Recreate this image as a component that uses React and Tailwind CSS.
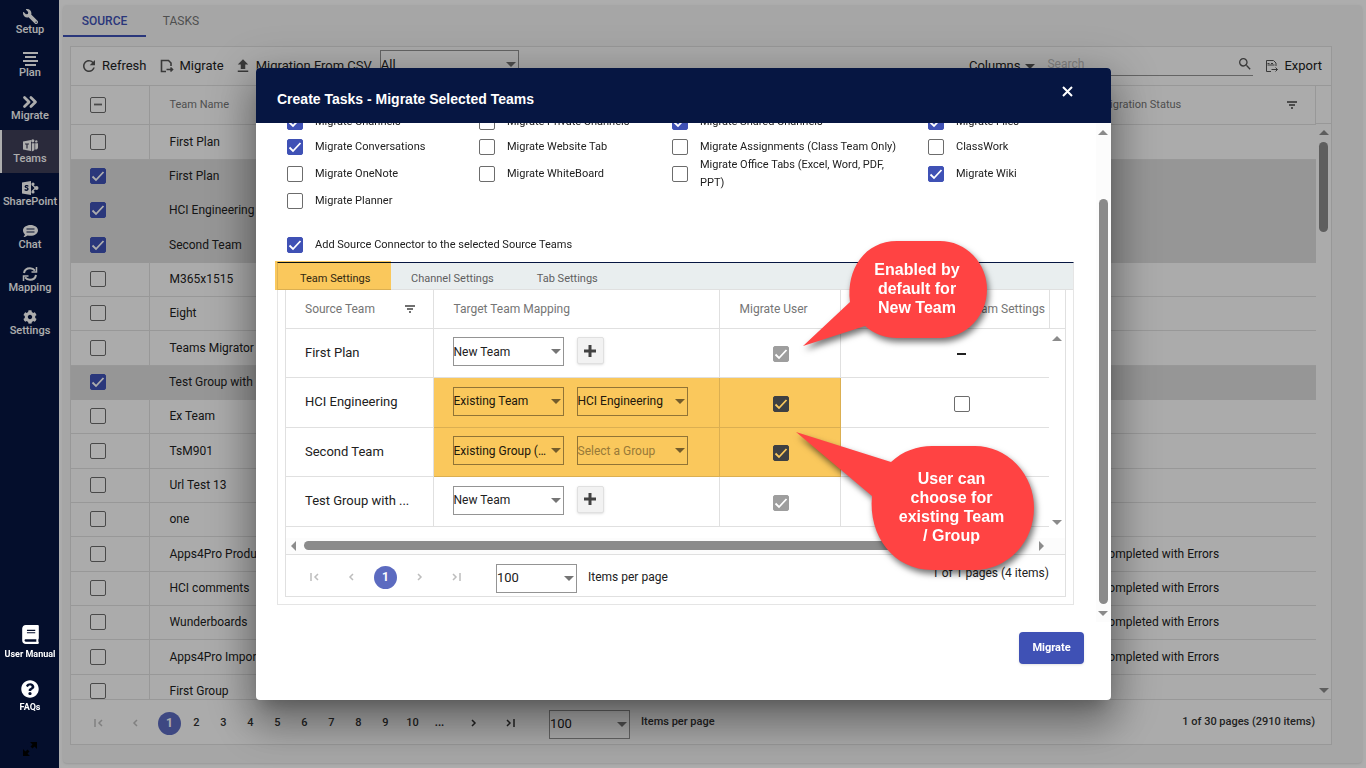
import clsx from 'clsx'
import { FaBook, FaCog, FaQuestionCircle, FaWrench } from 'react-icons/fa'
import { FiChevronsRight } from 'react-icons/fi'
import { MdRefresh, MdUpload, MdSearch } from 'react-icons/md'

const NAV_ITEMS = [
  { label: 'Setup', icon: <FaWrench size={15} className="-scale-x-100" /> },
  { label: 'Plan', icon: <PlanIcon /> },
  { label: 'Migrate', icon: <FiChevronsRight size={22} strokeWidth={3} /> },
  { label: 'Teams', icon: <TeamsIcon />, active: true },
  { label: 'SharePoint', icon: <SharePointIcon /> },
  { label: 'Chat', icon: <ChatIcon /> },
  { label: 'Mapping', icon: <SyncIcon /> },
  { label: 'Settings', icon: <FaCog size={14} /> },
]

const TEAMS = [
  { name: 'First Plan' },
  { name: 'First Plan', selected: true },
  { name: 'HCI Engineering', selected: true },
  { name: 'Second Team', selected: true },
  { name: 'M365x1515' },
  { name: 'Eight' },
  { name: 'Teams Migrator 1' },
  { name: 'Test Group with Channels', selected: true },
  { name: 'Ex Team' },
  { name: 'TsM901' },
  { name: 'Url Test 13' },
  { name: 'one' },
  { name: 'Apps4Pro Product', status: 'Completed with Errors' },
  { name: 'HCI comments', status: 'Completed with Errors' },
  { name: 'Wunderboards', status: 'Completed with Errors' },
  { name: 'Apps4Pro Import', status: 'Completed with Errors' },
  { name: 'First Group' },
]

const OPTION_ROWS = [
  [['Migrate Channels', true], ['Migrate Private Channels', false], ['Migrate Shared Channels', true], ['Migrate Files', true]],
  [['Migrate Conversations', true], ['Migrate Website Tab', false], ['Migrate Assignments (Class Team Only)', false], ['ClassWork', false]],
  [['Migrate OneNote', false], ['Migrate WhiteBoard', false], ['Migrate Office Tabs (Excel, Word, PDF, PPT)', false], ['Migrate Wiki', true]],
  [['Migrate Planner', false]],
]

const MAPPINGS = [
  { name: 'First Plan', mode: 'New Team', locked: true },
  { name: 'HCI Engineering', mode: 'Existing Team', target: 'HCI Engineering', hasSettings: true },
  { name: 'Second Team', mode: 'Existing Group (Office 365)', target: '' },
  { name: 'Test Group with ...', mode: 'New Team', locked: true },
]

function PlanIcon() {
  return (
    <svg width="15" height="14" viewBox="0 0 15 14" fill="none" stroke="currentColor" strokeWidth="2">
      <path d="M0 1h15M2 5h11M0 9h15M2 13h11" />
    </svg>
  )
}

function TeamsIcon() {
  return (
    <svg width="15" height="13" viewBox="0 0 15 13" fill="currentColor">
      <path fillRule="evenodd" d="M0 2.5 8 1v11L0 10.5ZM2 4.5v1h1.4v4h1.2v-4H6v-1Z" />
      <circle cx="9.8" cy="1.8" r="1.6" />
      <circle cx="13.3" cy="2.4" r="1.2" />
      <path d="M8.8 4.2h2.7V10c0 1.4-1.2 2.4-2.7 2.2ZM12.2 4.2H15v4.2c0 1.3-1.2 2.2-2.8 2Z" />
    </svg>
  )
}

function SharePointIcon() {
  return (
    <svg width="17" height="14" viewBox="0 0 17 14" fill="currentColor">
      <path fillRule="evenodd" d="M0 1.5 9 0v14L0 12.5ZM6.4 4.4C4.5 3.5 2.6 4 2.6 5.6c0 1.7 2.6 1.3 2.6 2.4 0 .7-1.4.7-2.6.1v1.5c2 .8 4 .2 4-1.6C6.6 6 4 6.4 4 5.5c0-.5 1.2-.5 2.4.2Z" />
      <path d="M10 3.5 13.5 7 10 10.5" fill="none" stroke="currentColor" strokeWidth="1.2" />
      <circle cx="11" cy="3" r="1.6" />
      <circle cx="11" cy="11" r="1.6" />
      <circle cx="14.5" cy="7" r="2" />
    </svg>
  )
}

function ChatIcon() {
  return (
    <svg width="15" height="13" viewBox="0 0 15 13" fill="currentColor">
      <path
        fillRule="evenodd"
        d="M7.5 0C11.6 0 15 2.4 15 5.4s-3.4 5.4-7.5 5.4c-1 0-2-.1-2.9-.4C3.6 11.2 2.2 12 .5 12c.8-.9 1.3-1.8 1.4-2.8C.7 8.2 0 6.9 0 5.4 0 2.4 3.4 0 7.5 0ZM3.500 3.500v1h8v-1ZM3.500 6.500v1h8v-1Z"
      />
    </svg>
  )
}

function SyncIcon() {
  return (
    <svg width="16" height="14" viewBox="0 0 16 14" fill="none" stroke="currentColor" strokeWidth="2">
      <path d="M2 6C2.5 3.2 5 1.3 8 1.3c2 0 3.8.9 5 2.4M14 8c-.5 2.8-3 4.7-6 4.7-2 0-3.8-.9-5-2.4" />
      <path d="M14.5 0v5h-5M1.5 14V9h5" strokeWidth="1.5" />
    </svg>
  )
}

function ExpandIcon() {
  return (
    <svg width="14" height="14" viewBox="0 0 14 14" fill="currentColor">
      <path d="M7 0h7v7l-2.500-2.500L9.500 6.500l-2-2L9.500 2.500ZM7 14H0V7l2.500 2.500L4.500 7.500l2 2L4.500 11.500Z" />
    </svg>
  )
}

function FilterIcon() {
  return (
    <svg width="10" height="8" viewBox="0 0 10 8" fill="none" stroke="currentColor" strokeWidth="1.4" className="text-[#424242]">
      <path d="M0 1h10M2 4h6M4 7h2" />
    </svg>
  )
}

function FileArrowIcon({ csv }) {
  return (
    <svg width="14" height="14" viewBox="0 0 14 14" fill="none" stroke="currentColor" strokeWidth={csv ? 1 : 1.6}>
      <path d="M6 12.5H1.5v-11h7L11 4v3" />
      {csv && <path d="M2.5 6h7M2.5 4.5h2M6 4.5h2" />}
      <path d="M6.5 10.5h6M10.5 8.5l2 2-2 2" />
    </svg>
  )
}

function Caret({ className }) {
  return (
    <svg className={className} width="10" height="5" viewBox="0 0 10 5" fill="currentColor" aria-hidden="true">
      <path d="M0 0h10L5 5Z" />
    </svg>
  )
}

function Checkbox({ checked = false, indeterminate, disabled, ...props }) {
  return (
    <span className="relative inline-block size-4 shrink-0 align-middle">
      <input
        type="checkbox"
        defaultChecked={checked}
        disabled={disabled}
        className="block size-4 appearance-none rounded-xs border border-[#6c6c6c] bg-white checked:border-[#3f51b5] checked:bg-[#3f51b5] disabled:border-[#9e9e9e] disabled:bg-[#9e9e9e]"
        {...props}
      />
      {checked || indeterminate ? (
        <svg
          className={clsx('pointer-events-none absolute inset-0', indeterminate ? 'text-[#6c6c6c]' : 'text-white')}
          viewBox="0 0 16 16"
          fill="none"
          stroke="currentColor"
          strokeWidth="1.8"
        >
          <path d={indeterminate ? 'M4 7.5h8' : 'm2.5 8.5 3.5 3.5 7.5-8'} />
        </svg>
      ) : null}
    </span>
  )
}

function SelectBox({ label, value, placeholder, className }) {
  return (
    <span className={clsx('relative inline-block', className)}>
      <select
        aria-label={label}
        defaultValue={value}
        className={clsx(
          'block size-full appearance-none truncate border border-[#949494] bg-white pr-4',
          placeholder ? 'text-[#9b9b9b]' : 'text-[#212121]',
        )}
      >
        <option value={value}>{placeholder ?? value}</option>
      </select>
      <Caret className="pointer-events-none absolute right-[3px] top-3 text-[#757575]" />
    </span>
  )
}

function ArrowMark({ dir = 'up' }) {
  const paths = { up: 'M0 8 5 3l5 5Z', down: 'M0 3h10L5 8Z', left: 'M7 0v10L2 5Z', right: 'M3 0v10l5-5Z' }
  return (
    <svg width="10" height="10" viewBox="0 0 10 10" className="shrink-0 text-[#8b8b8b]" fill="currentColor">
      <path d={paths[dir]} />
    </svg>
  )
}

function PageMark({ kind, dim }) {
  const paths = {
    first: 'M1 1v8M8 2 5 5l3 3',
    prev: 'M7 2 4 5l3 3',
    next: 'M3 2l3 3-3 3',
    last: 'M2 2l3 3-3 3M9 1v8',
  }
  return (
    <button type="button" aria-label={`${kind} page`} disabled={dim} className="text-[#333] disabled:text-[#bdbdbd]">
      <svg width="10" height="10" viewBox="0 0 10 10" fill="none" stroke="currentColor" strokeWidth="1.5">
        <path d={paths[kind]} />
      </svg>
    </button>
  )
}

function CurrentPage() {
  return (
    <button type="button" className="size-[23px] rounded-full bg-[#5c6bc0] text-xs font-bold text-white">
      1
    </button>
  )
}

function Sidebar() {
  return (
    <nav className="flex w-[59px] shrink-0 flex-col bg-[#061642] pt-px text-[11px] font-medium text-white">
      {NAV_ITEMS.map(({ label, icon, active }) => (
        <a
          key={label}
          href="#"
          className={clsx(
            'flex h-[43px] flex-col items-center border-l-2 pr-px pt-[7px]',
            active ? 'border-white bg-[#3e3e58]' : 'border-transparent',
          )}
        >
          <span className="flex h-4 items-center">{icon}</span>
          <span className="leading-3">{label}</span>
        </a>
      ))}
      <div className="relative z-20 mt-auto flex flex-col items-center gap-5 pb-6 pl-px text-[9px] font-bold">
        <a href="#" className="flex flex-col items-center gap-1">
          <FaBook size={19} />
          <span className="leading-3">User Manual</span>
        </a>
        <a href="#" className="flex flex-col items-center gap-[3px]">
          <FaQuestionCircle size={18} />
          <span className="leading-3">FAQs</span>
        </a>
      </div>
      <button type="button" aria-label="Expand" className="flex h-[31px] items-center justify-center pb-2 text-black">
        <ExpandIcon />
      </button>
    </nav>
  )
}

function Toolbar() {
  return (
    <div className="flex h-[39px] shrink-0 items-center overflow-hidden border-b border-[#e0e0e0] pl-[9px] pr-[9px] text-[13px] text-[#212121]">
      <button type="button" className="flex items-center gap-1">
        <MdRefresh size={18} className="text-[#555]" />
        Refresh
      </button>
      <button type="button" className="ml-[14px] flex items-center gap-[5px]">
        <span className="text-[#555]"><FileArrowIcon /></span>
        Migrate
      </button>
      <button type="button" className="ml-[10px] flex items-center gap-1">
        <MdUpload size={18} className="text-[#555]" />
        Migration From CSV
      </button>
      <SelectBox label="Status filter" value="All" className="mb-[2px] ml-2 h-[30px] w-[139px]" />
      <button type="button" className="ml-auto flex items-center gap-[5px]">
        Columns
        <Caret className="text-[#555]" />
      </button>
      <div className="mb-1 ml-3 flex h-6 w-[206px] items-center border-b border-[#949494]">
        <input type="text" aria-label="Search" placeholder="Search" className="min-w-0 grow bg-transparent text-xs outline-none placeholder:text-[#bdbdbd]" />
        <MdSearch size={16} className="text-[#555]" />
      </div>
      <button type="button" className="ml-3 flex items-center gap-[5px]">
        <span className="text-[#555]"><FileArrowIcon csv /></span>
        Export
      </button>
    </div>
  )
}

function TeamsGrid() {
  return (
    <section className="mb-[18px] ml-[7px] mr-[30px] mt-[9px] flex min-h-0 grow flex-col border border-[#e0e0e0] bg-[#fdfdfd]">
      <Toolbar />
      <div className="flex min-h-0 grow">
        <div className="min-w-0 grow overflow-hidden">
          <table className="w-full table-fixed border-collapse text-left text-xs text-[#212121]">
            <colgroup>
              <col className="w-[78px]" />
              <col />
              <col className="w-[234px]" />
            </colgroup>
            <thead>
              <tr className="h-[38px] border-b border-[#e0e0e0] text-[11px] text-[#757575]">
                <th className="border-r border-[#e0e0e0] pl-[19px]">
                  <Checkbox indeterminate aria-label="Select all teams" />
                </th>
                <th className="pl-5 pt-px font-normal">Team Name</th>
                <th className="border-r border-[#e0e0e0] pl-[19px] pt-px font-normal">
                  <span className="flex items-center justify-between pr-[18px]">
                    Migration Status
                    <FilterIcon />
                  </span>
                </th>
              </tr>
            </thead>
            <tbody>
              {TEAMS.map((team, i) => (
                <tr
                  key={i}
                  className={clsx(
                    'h-[34px] border-b nth-[3n+1]:h-[35px]',
                    team.selected ? 'border-[#dedede] bg-[#dedede]' : 'border-[#e0e0e0]',
                  )}
                >
                  <td className={clsx('pl-[19px]', !team.selected && 'border-r border-[#e0e0e0]')}>
                    <Checkbox checked={team.selected} aria-label={`Select ${team.name}`} />
                  </td>
                  <td className="whitespace-nowrap pl-5">{team.name}</td>
                  <td className="pl-[19px]">{team.status}</td>
                </tr>
              ))}
            </tbody>
          </table>
        </div>
        <div className="flex w-[15px] shrink-0 flex-col items-center pb-1">
          <div className="mb-[3px] h-[38px] w-full border-b border-[#e0e0e0]" />
          <ArrowMark />
          <div className="mt-[5px] h-[90px] w-[9px] rounded-full bg-[#8b8b8b]" />
          <div className="grow" />
          <ArrowMark dir="down" />
        </div>
      </div>
      <footer className="flex h-[45px] shrink-0 items-center border-t border-[#e0e0e0] pl-[23px] pr-4 pt-[2px] text-[11px] font-medium text-[#333]">
        <PageMark kind="first" dim />
        <span className="ml-[26px] flex"><PageMark kind="prev" dim /></span>
        <span className="ml-[18px] mr-[2px] flex"><CurrentPage /></span>
        {[2, 3, 4, 5, 6, 7, 8, 9, 10].map((n) => (
          <button key={n} type="button" className="w-[27px]">
            {n}
          </button>
        ))}
        <button type="button" className="w-[27px] font-bold">...</button>
        <span className="ml-4 flex"><PageMark kind="next" /></span>
        <span className="ml-[26px] flex"><PageMark kind="last" /></span>
        <SelectBox label="Page size" value="100" className="ml-[34px] mt-[2px] h-[29px] w-[81px] text-[13px] font-normal" />
        <span className="ml-[11px] pb-[2px]">Items per page</span>
        <span className="ml-auto pb-[2px]">1 of 30 pages (2910 items)</span>
      </footer>
    </section>
  )
}

function MappingGrid() {
  return (
    <div className="relative mx-[7px] mb-[7px] border border-t-0 border-[#e0e0e0] bg-white">
      <div className="flex">
        <div className="min-w-0 grow">
          <table className="w-full table-fixed border-collapse text-left text-[13px] text-[#212121]">
            <colgroup>
              <col className="w-[147px]" />
              <col className="w-[286px]" />
              <col className="w-[121px]" />
              <col />
            </colgroup>
            <thead>
              <tr className="h-[38px] border-b border-[#e0e0e0] text-xs text-[#757575]">
                <th className="border-r border-[#e0e0e0] pl-[19px] font-normal">
                  <span className="flex items-center justify-between pr-[18px]">
                    Source Team
                    <FilterIcon />
                  </span>
                </th>
                <th className="border-r border-[#e0e0e0] pl-5 font-normal">Target Team Mapping</th>
                <th className="border-r border-[#e0e0e0] pl-5 font-normal">Migrate User</th>
                <th className="border-r border-[#e0e0e0] pr-1 text-right font-normal">Team Settings</th>
              </tr>
            </thead>
            <tbody>
              {MAPPINGS.map((row) => (
                <tr key={row.name} className="h-[49px] border-b border-[#e0e0e0] even:h-[50px]">
                  <td className="border-r border-[#e0e0e0] pl-[19px]">{row.name}</td>
                  <td className="border-r border-[#e0e0e0] pl-[19px]">
                    <div className="flex gap-[13px] pb-[2px] text-xs">
                      <SelectBox label={`Target type for ${row.name}`} value={row.mode} className="h-[29px] w-[111px]" />
                      {row.locked ? (
                        <button
                          type="button"
                          aria-label="Add team"
                          className="flex size-[27px] items-center justify-center rounded-xs border border-[#e0e0e0] bg-[#f2f2f2] shadow"
                        >
                          <svg width="12" height="12" viewBox="0 0 12 12" stroke="#424242" strokeWidth="3">
                            <path d="M6 0v12M0 6h12" />
                          </svg>
                        </button>
                      ) : (
                        <SelectBox
                          label={`Target for ${row.name}`}
                          value={row.target}
                          placeholder={row.target ? undefined : 'Select a Group'}
                          className="h-[29px] w-[111px]"
                        />
                      )}
                    </div>
                  </td>
                  <td className="border-r border-[#e0e0e0] pl-[2px] pt-[2px] text-center">
                    <Checkbox checked disabled={row.locked} aria-label={`Migrate users of ${row.name}`} />
                  </td>
                  <td className="pl-[34px] pt-[2px] text-center">
                    {row.hasSettings ? (
                      <Checkbox aria-label={`Migrate settings of ${row.name}`} />
                    ) : (
                      <span className="inline-block h-[2px] w-[9px] bg-[#212121] align-middle" />
                    )}
                  </td>
                </tr>
              ))}
            </tbody>
          </table>
        </div>
        <div className="flex w-[15px] shrink-0 flex-col items-center">
          <div className="mb-1 h-[39px] w-full border-b border-[#e0e0e0]" />
          <ArrowMark />
          <div className="grow" />
          <ArrowMark dir="down" />
        </div>
      </div>
      {/* highlighted cells for the existing team / group rows */}
      <div className="pointer-events-none absolute left-[148px] top-[88px] h-[99px] w-[407px] bg-[#fac85c] mix-blend-multiply" />

      <div className="mt-[11px] flex h-4 items-center bg-[#fcfcfc] pl-[3px] pr-[19px]">
        <ArrowMark dir="left" />
        <div className="ml-[5px] mr-[30px] h-[9px] grow rounded-full bg-[#8b8b8b]" />
        <ArrowMark dir="right" />
      </div>
      <footer className="flex h-[42px] items-center border-t border-[#e0e0e0] pl-6 pr-4 pt-1 text-xs text-[#212121]">
        <PageMark kind="first" dim />
        <span className="ml-[26px] flex"><PageMark kind="prev" dim /></span>
        <span className="mx-[18px] flex"><CurrentPage /></span>
        <PageMark kind="next" dim />
        <span className="ml-[26px] flex"><PageMark kind="last" dim /></span>
        <SelectBox label="Items per page" value="100" className="ml-[35px] mt-[2px] h-[29px] w-[81px] text-[13px]" />
        <span className="ml-[11px]">Items per page</span>
        <span className="ml-auto pb-2">1 of 1 pages (4 items)</span>
      </footer>
    </div>
  )
}

function Callout({ className, textClass, d, width, height, children }) {
  return (
    <div className={clsx('pointer-events-none absolute', className)}>
      <svg
        width={width}
        height={height}
        viewBox={`0 0 ${width} ${height}`}
        fill="#ff4343"
        className="block overflow-visible drop-shadow-[2px_4px_3px_rgba(0,0,0,0.55)]"
      >
        <path d={d} />
      </svg>
      <p className={clsx('absolute flex items-center justify-center pb-[3px] text-center font-[Liberation_Sans,sans-serif] text-base font-bold leading-[19px] text-white', textClass)}>
        {children}
      </p>
    </div>
  )
}

function MigrateDialog() {
  return (
    <div role="dialog" aria-labelledby="dialog-title" className="relative flex w-[855px] max-w-full flex-col rounded bg-white shadow-[0_11px_15px_-7px_rgba(0,0,0,0.2),0_24px_38px_3px_rgba(0,0,0,0.25),0_9px_46px_8px_rgba(0,0,0,0.2)]">
      <header className="flex h-[55px] justify-between rounded-t bg-[#061642] pl-[21px] pr-[38px] text-white">
        <h2 id="dialog-title" className="pt-[21px] font-[Liberation_Sans,sans-serif] text-sm font-bold leading-5">
          Create Tasks - Migrate Selected Teams
        </h2>
        <button type="button" aria-label="Close" className="mt-[18px] h-[11px]">
          <svg width="11" height="11" viewBox="0 0 11 11" stroke="currentColor" strokeWidth="2">
            <path d="m1 1 9 9M10 1l-9 9" />
          </svg>
        </button>
      </header>

      <div className="flex h-[499px] overflow-hidden">
        <div className="-mt-[10px] min-w-0 grow pl-[21px] pr-[22px] text-[11px] text-[#212121]">
          {OPTION_ROWS.map((row, i) => (
            <div key={i} className="grid grid-cols-[192px_193px_256px_1fr] items-center pl-[10px] leading-[18px] first:mb-[7px]">
              {row.map(([label, checked]) => (
                <label key={label} className="flex items-center gap-3 pr-6 last:pr-0">
                  <Checkbox checked={checked} />
                  {label}
                </label>
              ))}
            </div>
          ))}
          <label className="mt-[26px] flex items-center gap-3 pl-[10px] leading-[18px]">
            <Checkbox checked />
            Add Source Connector to the selected Source Teams
          </label>

          <div className="mt-2 border border-[#e5e5e5] border-t-[#061642]">
            <div role="tablist" className="relative flex h-[27px] border-b border-[#e0e0e0] bg-[#e9eeef] text-[#5f5f5f]">
              <button type="button" role="tab" aria-selected="true" className="w-[113px] bg-white pl-[22px] pt-[7px] text-left text-[#333]">
                Team Settings
              </button>
              <button type="button" role="tab" className="ml-5 pt-[7px]">Channel Settings</button>
              <button type="button" role="tab" className="ml-[43px] pt-[7px]">Tab Settings</button>
              <div className="pointer-events-none absolute -left-[3px] -top-[2px] h-[29px] w-[116px] bg-[#fac85c] mix-blend-multiply" />
            </div>
            <MappingGrid />
          </div>
        </div>
        <div className="flex w-[15px] shrink-0 flex-col items-center bg-[#fcfcfc] pb-1 pt-1">
          <ArrowMark />
          <div className="mb-1 mt-[62px] w-[9px] grow rounded-full bg-[#8b8b8b]" />
          <ArrowMark dir="down" />
        </div>
      </div>

      <footer className="flex h-[78px] justify-end pr-[27px] pt-[10px]">
        <button type="button" className="h-8 w-[65px] rounded bg-[#3f51b5] text-[11px] font-bold text-white shadow">
          Migrate
        </button>
      </footer>

      <Callout
        className="left-[547px] top-[173px]"
        width={184}
        height={106}
        d="M94 0h43a47 48.5 0 0 1 0 97H94C82 97 71 93 62 85L0 105 47 61C43 28 62 0 94 0Z"
        textClass="left-[45px] top-0 h-[97px] w-[138px] px-5"
      >
        Enabled by default for New Team
      </Callout>
      <Callout
        className="left-[540px] top-[364px]"
        width={238}
        height={138}
        d="M136 14h43a59 62 0 0 1 0 124H136C98 138 72 104 76 64L0 0 95 30C107 19 121 14 136 14Z"
        textClass="left-[74px] top-[14px] h-[124px] w-[163px] px-[26px]"
      >
        User can choose for existing Team / Group
      </Callout>
    </div>
  )
}

export default function App() {
  return (
    <div className="flex h-screen overflow-hidden bg-white font-[Roboto,sans-serif]">
      <Sidebar />
      <main className="flex min-w-0 grow flex-col pb-[5px] pl-1 pr-1 pt-[5px]">
        <div className="flex min-h-0 grow flex-col rounded bg-[#f5f5f5] shadow">
          <div role="tablist" className="flex h-8 shrink-0 text-xs">
            <button type="button" role="tab" aria-selected="true" className="w-[83px] border-b-2 border-[#3f51b5] pt-[2px] font-medium text-[#3f51b5]">
              SOURCE
            </button>
            <button type="button" role="tab" className="w-[70px] border-b-2 border-transparent pt-[2px] text-[#757575]">
              TASKS
            </button>
          </div>
          <TeamsGrid />
        </div>
      </main>

      <div className="fixed inset-0 z-10 bg-black/32" />
      <div className="pointer-events-none fixed inset-0 z-30 flex items-center justify-center pl-px">
        <div className="pointer-events-auto">
          <MigrateDialog />
        </div>
      </div>
    </div>
  )
}
